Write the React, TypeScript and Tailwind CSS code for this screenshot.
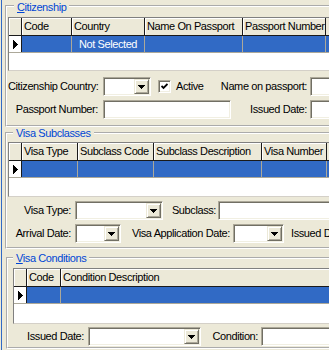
type Col = { label: string; w: string; value?: string };

const CIT_COLS: Col[] = [
  { label: 'Code', w: 'w-[50px]' },
  { label: 'Country', w: 'w-[73px]', value: 'Not Selected' },
  { label: 'Name On Passport', w: 'w-[98px]' },
  { label: 'Passport Number', w: 'w-[83px]' },
];

const VISA_COLS: Col[] = [
  { label: 'Visa Type', w: 'w-[56px]' },
  { label: 'Subclass Code', w: 'w-[76px]' },
  { label: 'Subclass Description', w: 'w-[108px]' },
  { label: 'Visa Number', w: 'w-[65px]' },
];

const COND_COLS: Col[] = [
  { label: 'Code', w: 'w-[34px]' },
  { label: 'Condition Description', w: 'w-[320px]' },
];

export default function App() {
  return (
    <div className="flex h-[350px] w-[329px] overflow-hidden bg-[#ECE9D8] font-['Liberation_Sans',Arial,sans-serif] text-[11px] tracking-[-0.4px] text-black">
      <div className="w-[1px] shrink-0" />
      <div className="w-[1px] shrink-0 bg-[#316AC5]" />
      <div className="flex flex-col pl-[3px]">
        {/* citizenship */}
        <Group
          title={<><span className="underline">C</span>itizenship</>}
          legendClass="ml-[6px] leading-[15px]"
          className="pl-[1px] pt-[5px] pb-[6px]"
        >
          <Grid cols={CIT_COLS} h="h-[54px]" />
          <div className="mt-[6px] flex h-[19px] items-center">
            <Label w="w-[90px]">Citizenship Country:</Label>
            <Combo className="ml-[5px] w-[48px]" />
            <Check className="ml-[7px]" />
            <span className="ml-[5px] w-[36px] shrink-0">Active</span>
            <Label w="w-[95px]">Name on passport:</Label>
            <Field className="ml-[3px] w-[80px]" />
          </div>
          <div className="mt-[4px] flex h-[19px] items-center">
            <Label w="w-[90px]">Passport Number:</Label>
            <Field className="ml-[5px] w-[128px]" />
            <Label w="w-[76px]">Issued Date:</Label>
            <Field className="ml-[3px] w-[80px]" />
          </div>
        </Group>

        {/* visa subclasses */}
        <Group
          title="Visa Subclasses"
          legendClass="ml-[5px] leading-[12px]"
          className="pl-[1px] pt-[3px] pb-[4px]"
        >
          <Grid cols={VISA_COLS} h="h-[55px]" />
          <div className="mt-[4px] flex h-[19px] items-center">
            <Label w="w-[63px]">Visa Type:</Label>
            <Combo className="ml-[4px] w-[88px]" />
            <Label w="w-[53px]">Subclass:</Label>
            <Field className="ml-[2px] w-[120px]" />
          </div>
          <div className="mt-[4px] flex h-[19px] items-center">
            <Label w="w-[63px]">Arrival Date:</Label>
            <Combo className="ml-[4px] w-[46px]" />
            <Label w="w-[109px]">Visa Application Date:</Label>
            <Combo className="ml-[3px] w-[51px]" />
            <span className="ml-[7px] shrink-0 whitespace-nowrap">Issued Date:</span>
          </div>
        </Group>

        {/* visa conditions */}
        <Group
          title={<><span className="underline">V</span>isa Conditions</>}
          legendClass="ml-0 leading-[12px]"
          className="mt-[3px] ml-[1px] pl-[5px] pt-[4px] pb-[1px]"
        >
          <Grid cols={COND_COLS} h="h-[56px]" />
          <div className="mt-[3px] flex h-[19px] items-center">
            <Label w="w-[71px]">Issued Date:</Label>
            <Combo className="ml-[4px] w-[113px]" />
            <Label w="w-[57px]">Condition:</Label>
            <Field className="ml-[3px] w-[80px]" />
          </div>
        </Group>
      </div>
    </div>
  );
}

/* ---------------- pieces ---------------- */

function Group({
  title,
  legendClass,
  className,
  children,
}: {
  title: React.ReactNode;
  legendClass: string;
  className: string;
  children: React.ReactNode;
}) {
  return (
    <fieldset
      className={[
        'w-[400px] shrink-0 border-2 border-white [border-style:groove]',
        className,
      ].join(' ')}
    >
      <legend
        className={['h-[12px] px-[3px] text-[#0046D5]', legendClass].join(' ')}
      >
        {title}
      </legend>
      {children}
    </fieldset>
  );
}

function Label({ w, children }: { w: string; children: React.ReactNode }) {
  return (
    <span className={[w, 'shrink-0 whitespace-nowrap text-right'].join(' ')}>
      {children}
    </span>
  );
}

const SUNKEN =
  'h-[19px] shrink-0 border border-t-[#ACA899] border-l-[#ACA899] border-b-white border-r-white bg-white shadow-[inset_1px_1px_0_#716F64,inset_-1px_-1px_0_#F1EFE2]';

function Field({ className }: { className: string }) {
  return <div className={[SUNKEN, className].join(' ')} />;
}

function Combo({ className }: { className: string }) {
  return (
    <div className={[SUNKEN, 'flex justify-end p-[1px]', className].join(' ')}>
      <div className="flex w-[15px] items-center justify-center border border-t-[#ECE9D8] border-l-[#ECE9D8] border-b-[#716F64] border-r-[#716F64] bg-[#ECE9D8] shadow-[inset_1px_1px_0_#fff,inset_-1px_-1px_0_#ACA899]">
        <svg width="7" height="4" viewBox="0 0 7 4" shapeRendering="crispEdges">
          <path d="M0 0H7L3.5 4Z" fill="#000" />
        </svg>
      </div>
    </div>
  );
}

function Check({ className }: { className: string }) {
  return (
    <div
      className={[
        'flex h-[13px] w-[13px] shrink-0 items-center justify-center border border-t-[#ACA899] border-l-[#ACA899] border-b-white border-r-white bg-white shadow-[inset_1px_1px_0_#716F64,inset_-1px_-1px_0_#F1EFE2]',
        className,
      ].join(' ')}
    >
      <svg width="7" height="7" viewBox="0 0 7 7">
        <path d="M0.5 3L2.5 5L6.5 1" stroke="#000" strokeWidth="1.8" fill="none" />
      </svg>
    </div>
  );
}

function Grid({ cols, h }: { cols: Col[]; h: string }) {
  return (
    <div
      className={[
        'w-[396px] shrink-0 overflow-hidden border border-t-[#808080] border-l-[#808080] border-b-[#D4D0C8] border-r-[#D4D0C8] bg-white',
        h,
      ].join(' ')}
    >
      <div className="flex h-[18px] border-b border-[#1a1a1a] bg-[#ECE9D8]">
        <div className="w-[13px] shrink-0 border-r border-[#1a1a1a] shadow-[inset_1px_1px_0_#fff]" />
        {cols.map((c, i) => (
          <div
            key={i}
            className={[
              c.w,
              'shrink-0 whitespace-nowrap border-r border-[#1a1a1a] pl-[2px] leading-[17px] shadow-[inset_1px_1px_0_#fff]',
            ].join(' ')}
          >
            {c.label}
          </div>
        ))}
        <div className="flex-1" />
      </div>
      <div className="flex h-[17px] border-b border-[#ACA899] bg-[#316AC5] text-white">
        <div className="flex w-[13px] shrink-0 items-center justify-center border-r border-[#1a1a1a] bg-white">
          <svg width="5" height="9" viewBox="0 0 5 9" shapeRendering="crispEdges">
            <path d="M0 0L5 4.5L0 9Z" fill="#000" />
          </svg>
        </div>
        {cols.map((c, i) => (
          <div
            key={i}
            className={[
              c.w,
              'shrink-0 whitespace-nowrap border-r border-[#ACA899] text-center leading-[16px]',
            ].join(' ')}
          >
            {c.value ?? ''}
          </div>
        ))}
        <div className="flex-1" />
      </div>
    </div>
  );
}
